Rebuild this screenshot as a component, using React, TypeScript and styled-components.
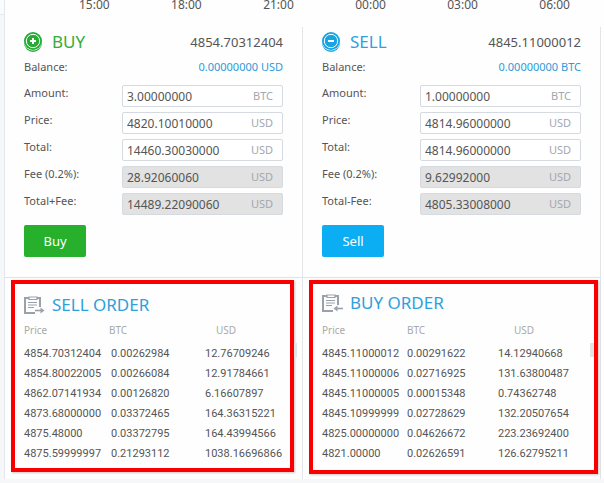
import React from "react";
import styled, { createGlobalStyle } from "styled-components";

const GlobalStyle = createGlobalStyle`
  *, *::before, *::after { box-sizing: border-box; }
  body {
    margin: 0;
    background: #f5f7f9;
    color: #555555;
    font-family: "Noto Sans", "Open Sans", sans-serif;
    font-size: 11px;
    line-height: 16px;
  }
  button, input { font: inherit; color: inherit; }
`;

const Page = styled.main`
  display: flex;
`;

const Gutter = styled.div`
  flex: 0 0 5px;
  border-right: 1px solid #e4e8ec;

  &::before {
    content: "";
    display: block;
    height: 15px;
    background: #fafbfb;
    border-bottom: 1px solid #e6e9ed;
  }
`;

const Content = styled.div`
  flex: 1;
  min-width: 0;
  padding-right: 3px;
  background: #fefefe;
`;

const TimeAxis = styled.div`
  display: flex;
  justify-content: space-between;
  height: 27px;
  padding: 0 31px 0 74px;
  font-size: 12px;
  line-height: 9px;
`;

const Panels = styled.div`
  display: grid;
  grid-template-columns: repeat(2, minmax(0, 1fr));
`;

const TradePanel = styled.form`
  padding: 2px 19px 20px;
  border-right: 1px solid #e3e5e9;
  border-bottom: 1px solid #dce4eb;
`;

const TradeHead = styled.header`
  display: flex;
  align-items: center;
  height: 26px;
`;

const Title = styled.h2<{ $color: string }>`
  margin: 0 0 0 10px;
  color: ${(p) => p.$color};
  font-size: 17px;
  font-weight: 400;
  line-height: 24px;
`;

const BestPrice = styled.span`
  margin-left: auto;
  font-size: 13px;
`;

const Balance = styled.div`
  display: flex;
  justify-content: space-between;
  margin-bottom: 6px;
  line-height: 24px;
`;

const BalanceValue = styled.span`
  color: #2d9bd6;
`;

const Fields = styled.div`
  display: grid;
  gap: 5px;
`;

const FieldRow = styled.div`
  display: flex;
  align-items: flex-start;
`;

const FieldLabel = styled.label`
  flex: 0 0 98px;
`;

const InputBox = styled.div<{ $locked: boolean }>`
  display: flex;
  flex: 1;
  align-items: center;
  min-width: 0;
  height: 22px;
  padding: 0 9px 0 4px;
  border: 1px solid #d5d9e0;
  border-radius: 2px;
  background: ${(p) => (p.$locked ? "#e2e2e2" : "#ffffff")};
`;

const Input = styled.input`
  flex: 1;
  width: 100%;
  min-width: 0;
  height: 20px;
  padding: 1px 0 0;
  border: 0;
  outline: 0;
  background: transparent;
  font-size: 12px;
`;

const Unit = styled.span`
  color: #a1a7b1;
`;

const SubmitButton = styled.button<{ $color: string }>`
  display: block;
  width: 62px;
  height: 32px;
  margin-top: 10px;
  padding: 0;
  border: 0;
  border-radius: 2px;
  background: ${(p) => p.$color};
  color: #ffffff;
  font-size: 13px;
`;

const OrderPanel = styled.section<{ $edge: number }>`
  padding: 2px ${(p) => p.$edge}px 5px 6px;
  border-right: 1px solid #e3e5e9;
`;

const OrderFrame = styled.div<{ $raised: boolean }>`
  position: relative;
  padding: ${(p) => (p.$raised ? "7px 0 6px 9px" : "9px 0 4px 9px")};
  border: 4px solid #f90000;
  box-shadow: 1px 1px 2px rgba(120, 60, 60, 0.3);
`;

const OrderHead = styled.header<{ $raised: boolean }>`
  display: flex;
  align-items: center;
  margin-bottom: ${(p) => (p.$raised ? 5 : 3)}px;

  h2 { margin-left: 7px; }
`;

const ScrollThumb = styled.span<{ $outside: boolean }>`
  position: absolute;
  top: 59px;
  right: ${(p) => (p.$outside ? -7 : 0)}px;
  width: ${(p) => (p.$outside ? 3 : 4)}px;
  height: 14px;
  background: #e2e4e7;
`;

const OrderTable = styled.table`
  width: 100%;
  border-collapse: collapse;
  table-layout: fixed;
  line-height: 20px;
  white-space: nowrap;
`;

const Col = styled.col<{ $width: number }>`
  width: ${(p) => p.$width}px;
`;

const HeadCell = styled.th<{ $indent?: number }>`
  padding: 0 0 4px ${(p) => p.$indent ?? 0}px;
  color: #a9a9a9;
  font-size: 10px;
  font-weight: 400;
  text-align: left;
`;

const Cell = styled.td<{ $indent?: number }>`
  padding: 0 0 0 ${(p) => p.$indent ?? 0}px;
  font-family: Roboto, "Noto Sans", sans-serif;
`;

const BLUE = "#2ea0dc";

function CoinIcon({ color, plus }: { color: string; plus: boolean }) {
  return (
    <svg width="18" height="22" viewBox="0 0 18 22" aria-hidden="true">
      <ellipse cx="9" cy="12" rx="9" ry="9" fill={color} />
      <circle cx="9" cy="10.6" r="9" fill="#fff" />
      <circle cx="9" cy="10" r="9" fill={color} />
      <circle cx="9" cy="10" r="6.7" fill="none" stroke="#fff" strokeWidth="1" />
      <path d="M6 10h6" stroke="#fff" strokeWidth="2" />
      {plus && <path d="M9 7v6" stroke="#fff" strokeWidth="2" />}
    </svg>
  );
}

function ClipboardIcon({ outgoing }: { outgoing: boolean }) {
  return (
    <svg width="21" height="19" viewBox="0 0 21 19" fill="none" stroke="#9ba1aa" aria-hidden="true">
      <path d="M5 2H1v15h10M13 2h3v9" strokeWidth="2" />
      <path d="M5 1h8v2.5H5z" strokeWidth="1.2" />
      <path d="M4 6.5h9M4 9h9M4 11.5h6" strokeWidth="1.1" />
      {outgoing ? (
        <>
          <path d="M11 14.5h7" strokeWidth="1.6" />
          <path d="M16.5 11.5L20.5 14.5 16.5 17.5z" fill="#9ba1aa" stroke="none" />
        </>
      ) : (
        <>
          <path d="M14 14.5h7" strokeWidth="1.6" />
          <path d="M15.5 11.5L11.5 14.5 15.5 17.5z" fill="#9ba1aa" stroke="none" />
        </>
      )}
    </svg>
  );
}

interface Field {
  label: string;
  value: string;
  unit: string;
  locked?: boolean;
}

interface TradeProps {
  id: string;
  title: string;
  titleColor: string;
  iconColor: string;
  buttonColor: string;
  price: string;
  balance: string;
  action: string;
  fields: Field[];
}

function Trade(p: TradeProps) {
  return (
    <TradePanel onSubmit={(e) => e.preventDefault()}>
      <TradeHead>
        <CoinIcon color={p.iconColor} plus={p.id === "buy"} />
        <Title $color={p.titleColor}>{p.title}</Title>
        <BestPrice>{p.price}</BestPrice>
      </TradeHead>
      <Balance>
        <span>Balance:</span>
        <BalanceValue>{p.balance}</BalanceValue>
      </Balance>
      <Fields>
        {p.fields.map((f, i) => (
          <FieldRow key={f.label}>
            <FieldLabel htmlFor={`${p.id}-${i}`}>{f.label}</FieldLabel>
            <InputBox $locked={!!f.locked}>
              <Input id={`${p.id}-${i}`} defaultValue={f.value} readOnly={f.locked} />
              <Unit>{f.unit}</Unit>
            </InputBox>
          </FieldRow>
        ))}
      </Fields>
      <SubmitButton type="submit" $color={p.buttonColor}>{p.action}</SubmitButton>
    </TradePanel>
  );
}

interface OrdersProps {
  title: string;
  outgoing: boolean;
  rows: string[][];
}

function Orders({ title, outgoing, rows }: OrdersProps) {
  return (
    <OrderPanel $edge={outgoing ? 8 : 2}>
      <OrderFrame $raised={!outgoing}>
        <OrderHead $raised={!outgoing}>
          <ClipboardIcon outgoing={outgoing} />
          <Title $color={BLUE}>{title}</Title>
        </OrderHead>
        <OrderTable>
          <colgroup>
            <Col $width={85} />
            <Col $width={outgoing ? 96 : 91} />
            <col />
          </colgroup>
          <thead>
            <tr>
              <HeadCell scope="col">Price</HeadCell>
              <HeadCell scope="col">BTC</HeadCell>
              <HeadCell scope="col" $indent={outgoing ? 11 : 16}>USD</HeadCell>
            </tr>
          </thead>
          <tbody>
            {rows.map(([price, btc, usd]) => (
              <tr key={price}>
                <Cell>{price}</Cell>
                <Cell $indent={outgoing ? 2 : 0}>{btc}</Cell>
                <Cell>{usd}</Cell>
              </tr>
            ))}
          </tbody>
        </OrderTable>
        <ScrollThumb $outside={outgoing} />
      </OrderFrame>
    </OrderPanel>
  );
}

const TIMES = ["15:00", "18:00", "21:00", "00:00", "03:00", "06:00"];

const BUY_FIELDS: Field[] = [
  { label: "Amount:", value: "3.00000000", unit: "BTC" },
  { label: "Price:", value: "4820.10010000", unit: "USD" },
  { label: "Total:", value: "14460.30030000", unit: "USD" },
  { label: "Fee (0.2%):", value: "28.92060060", unit: "USD", locked: true },
  { label: "Total+Fee:", value: "14489.22090060", unit: "USD", locked: true },
];

const SELL_FIELDS: Field[] = [
  { label: "Amount:", value: "1.00000000", unit: "BTC" },
  { label: "Price:", value: "4814.96000000", unit: "USD" },
  { label: "Total:", value: "4814.96000000", unit: "USD" },
  { label: "Fee (0.2%):", value: "9.62992000", unit: "USD", locked: true },
  { label: "Total-Fee:", value: "4805.33008000", unit: "USD", locked: true },
];

const SELL_ORDERS = [
  ["4854.70312404", "0.00262984", "12.76709246"],
  ["4854.80022005", "0.00266084", "12.91784661"],
  ["4862.07141934", "0.00126820", "6.16607897"],
  ["4873.68000000", "0.03372465", "164.36315221"],
  ["4875.48000", "0.03372795", "164.43994566"],
  ["4875.59999997", "0.21293112", "1038.16696866"],
];

const BUY_ORDERS = [
  ["4845.11000012", "0.00291622", "14.12940668"],
  ["4845.11000006", "0.02716925", "131.63800487"],
  ["4845.11000005", "0.00015348", "0.74362748"],
  ["4845.10999999", "0.02728629", "132.20507654"],
  ["4825.00000000", "0.04626672", "223.23692400"],
  ["4821.00000", "0.02626591", "126.62795211"],
];

export default function App() {
  return (
    <>
      <GlobalStyle />
      <Page>
        <Gutter />
        <Content>
          <TimeAxis>
            {TIMES.map((t) => (
              <span key={t}>{t}</span>
            ))}
          </TimeAxis>
          <Panels>
            <Trade
              id="buy"
              title="BUY"
              titleColor="#35ad3b"
              iconColor="#27ab35"
              buttonColor="#26b02c"
              price="4854.70312404"
              balance="0.00000000 USD"
              action="Buy"
              fields={BUY_FIELDS}
            />
            <Trade
              id="sell"
              title="SELL"
              titleColor={BLUE}
              iconColor="#16a4e2"
              buttonColor="#0caef3"
              price="4845.11000012"
              balance="0.00000000 BTC"
              action="Sell"
              fields={SELL_FIELDS}
            />
            <Orders title="SELL ORDER" outgoing rows={SELL_ORDERS} />
            <Orders title="BUY ORDER" outgoing={false} rows={BUY_ORDERS} />
          </Panels>
        </Content>
      </Page>
    </>
  );
}
